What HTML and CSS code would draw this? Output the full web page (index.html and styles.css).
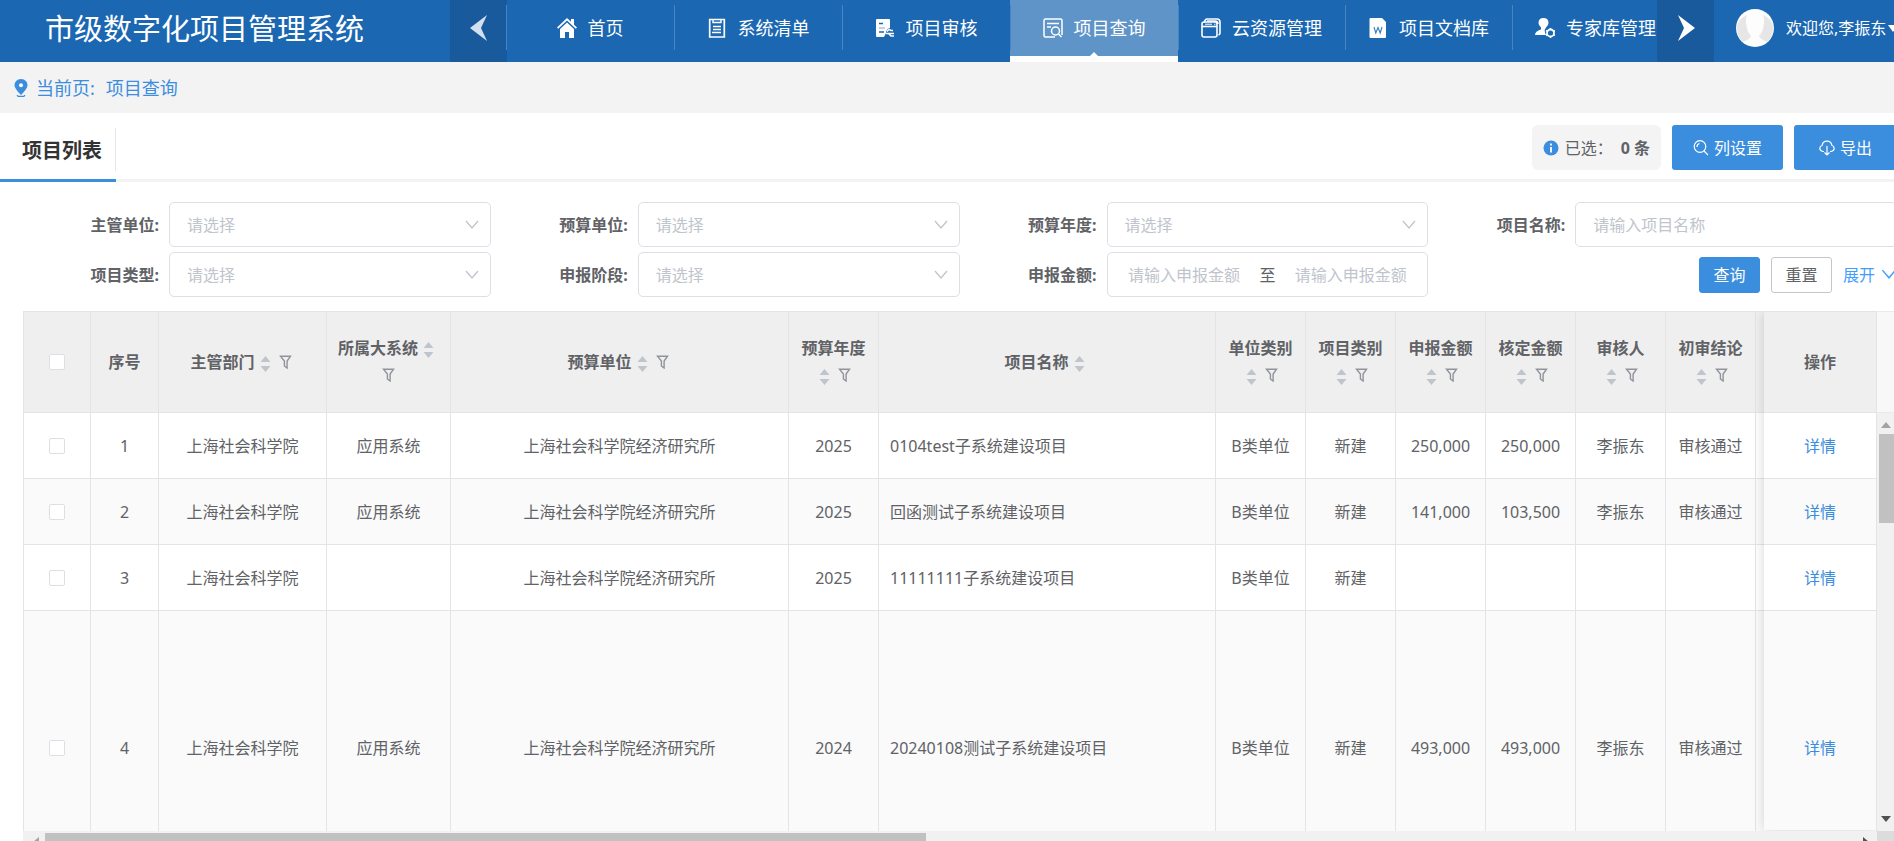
FILE: index.html
```
<!DOCTYPE html>
<html lang="zh-CN">
<head>
<meta charset="utf-8">
<title>市级数字化项目管理系统</title>
<link rel="stylesheet" href="styles.css">
</head>
<body>
<svg class="sprite" aria-hidden="true">
  <symbol id="funnel" viewBox="0 0 12 14"><path d="M1 1.2h10L7.6 6v7L4.9 11V6z" fill="none" stroke="currentColor" stroke-width="1.4"/></symbol>
  <symbol id="sort" viewBox="0 0 10 16"><path d="M5 0l5 6H0zM5 16l5-6H0z" fill="currentColor"/></symbol>
  <symbol id="chevron" viewBox="0 0 14 10"><path d="M1 1l6 7 6-7" fill="none" stroke="currentColor" stroke-width="1.3"/></symbol>
</svg>

<header class="topbar">
  <h1 class="brand">市级数字化项目管理系统</h1>
  <button class="nav-arrow" type="button" aria-label="向左"><svg width="18" height="26" viewBox="0 0 18 26"><path d="M17 0L0 13l17 13-6-13z" fill="#d3e0ef"/></svg></button>
  <nav class="nav">
    <a class="nav-item" href="#"><svg width="20" height="20" viewBox="0 0 20 20"><path d="M0 9.5L10 0l4 3.800V1h3v5.700l3 2.800-1.200 1.200L10 2.500 1.200 10.700z" fill="#fff"/><path d="M3 11l7-6.500L17 11v9h-5v-6H8v6H3z" fill="#fff"/></svg>首页</a>
    <a class="nav-item" href="#"><svg width="20" height="20" viewBox="0 0 20 20" fill="none" stroke="#fff"><path d="M5 1.500H2.700v17.500h14.600V1.500H15" stroke-width="1.700"/><path d="M5 1.500h10M6 1v3.500h8V1M6 8.500h8M6 11.500h8M5 14.500h9" stroke-width="1.400"/></svg>系统清单</a>
    <a class="nav-item" href="#"><svg width="20" height="20" viewBox="0 0 20 20"><path d="M2 1h12q1 0 1 1v8q-4 1-4 5l-2 4H2q-1 0-1-1V2q0-1 1-1z" fill="#fff"/><path d="M4 5.500h4M4 14h5" stroke="#1b67b2" stroke-width="1.500"/><path d="M4 10h6" stroke="#7aa8d5"/><path d="M12 13.500q2-3 4-1h2M11 15.500h8M13 15l3 3h3" fill="none" stroke="#fff" stroke-width="1.600"/></svg>项目审核</a>
    <a class="nav-item nav-item-active" href="#" aria-current="page"><svg width="20" height="20" viewBox="0 0 20 20" fill="none" stroke="#fff" stroke-width="1.500"><path d="M12 19H2.500Q1 19 1 17.500v-15Q1 1 2.500 1h15Q19 1 19 2.500V17"/><path d="M4 5.500h12M4 9h4"/><circle cx="12.500" cy="13" r="4"/><path d="M15.500 16l3 3"/></svg>项目查询</a>
    <a class="nav-item" href="#"><svg width="20" height="20" viewBox="0 0 20 20" fill="none" stroke="#fff" stroke-width="1.600"><path d="M3 4.500L4.500 1.700Q5 1 6 1h10q3 0 3 3v11q0 1.500-1.500 2"/><rect x="1" y="4" width="15" height="15" rx="2"/><path d="M1 8.500h15" /><path d="M4 6.200h7M13 6.200h1.500" stroke-width="1"/><path d="M6 3h8q3 0 3 3"/></svg>云资源管理</a>
    <a class="nav-item" href="#"><svg width="20" height="20" viewBox="0 0 20 20"><path d="M2.500 0H14l4 4v15q0 1-1 1H2.500q-1 0-1-1V1q0-1 1-1z" fill="#fff"/><path d="M6 9l1.800 6L10 9.500l2.200 5.500L14 9" fill="none" stroke="#3a7bbd" stroke-width="1.100"/></svg>项目文档库</a>
    <a class="nav-item" href="#"><svg width="20" height="20" viewBox="0 0 20 20"><path d="M0 17q0-4 6-5.500V9.500Q3.500 7.500 3.500 5q0-5 5-5t5 5q0 2.500-2.500 4.500-2 2-1 5l1 2.500z" fill="#fff"/><circle cx="15.500" cy="15" r="3.500" fill="none" stroke="#fff" stroke-width="1.800"/><path d="M15.500 10v1.500M15.500 18.500V20M11 12.500l1.300.8M20 12.500l-1.300.8M11 17.500l1.300-.8M20 17.500l-1.300-.8" stroke="#fff" stroke-width="1.500"/></svg>专家库管理</a>
  </nav>
  <button class="nav-arrow" type="button" aria-label="向右"><svg width="18" height="26" viewBox="0 0 18 26"><path d="M1 0l17 13L1 26l6-13z" fill="#fff"/></svg></button>
  <div class="user">
    <svg width="38" height="38" viewBox="0 0 38 38"><circle cx="19" cy="19" r="19" fill="#fdfdfd"/><path d="M11 6q-2 5-.5 11 1 7 4.500 10-1 3-8 6Q1 28 1 19 1 10 11 6zM27 6q2 5 .5 11-1 7-4.500 10 1 3 8 6 6-5 6-14Q37 10 27 6z" fill="#e6e6e6"/></svg>
    <button class="user-name" type="button">欢迎您,李振东<svg width="10" height="7" viewBox="0 0 10 7"><path d="M0 0h10L5 7z" fill="#fff"/></svg></button>
  </div>
</header>

<div class="crumb">
  <svg width="14" height="18" viewBox="0 0 14 18"><path d="M7 0q6.500.5 6.500 6.500Q13 10 7 16 1 10 .5 6.500.5.500 7 0z" fill="#3b8ddd"/><circle cx="7" cy="6.200" r="2" fill="#fff"/><path d="M3 16l1 1.300h6l1-1.300" fill="none" stroke="#3b8ddd" stroke-width="1.200"/></svg>
  <span>当前页:</span><a href="#">项目查询</a>
</div>

<div class="tabbar">
  <h2 class="tab">项目列表</h2>
  <div class="tools">
    <div class="selected"><svg width="16" height="16" viewBox="0 0 16 16"><circle cx="8" cy="8" r="7.500" fill="#3b8ddd"/><path d="M8 3.500v2M8 7v5.500" stroke="#fff" stroke-width="1.800"/></svg><span>已选：</span><b>0 条</b></div>
    <button class="btn-tool" type="button"><svg width="16" height="16" viewBox="0 0 16 16" fill="none" stroke="#fff" stroke-width="1.200"><circle cx="7" cy="6.500" r="5.800"/><path d="M4 7q0-3 2.500-3.500M11 11l4 4"/></svg>列设置</button>
    <button class="btn-tool" type="button"><svg width="16" height="16" viewBox="0 0 16 16" fill="none" stroke="#fff" stroke-width="1.200"><path d="M5 11.500H4Q.8 11 .8 8.300.8 6 3.200 5.200 3.800 1.200 8 1.200t4.800 4q2.400.8 2.400 3.100Q15.200 11 12 11.500h-1M8 6v9M5.500 12.500L8 15l2.500-2.500"/></svg>导出</button>
  </div>
</div>

<form class="filters">
  <div class="field"><label for="f1">主管单位:</label><div class="control"><select id="f1"><option>请选择</option></select><svg class="arrow"><use href="#chevron"/></svg></div></div>
  <div class="field"><label for="f2">预算单位:</label><div class="control"><select id="f2"><option>请选择</option></select><svg class="arrow"><use href="#chevron"/></svg></div></div>
  <div class="field"><label for="f3">预算年度:</label><div class="control"><select id="f3"><option>请选择</option></select><svg class="arrow"><use href="#chevron"/></svg></div></div>
  <div class="field"><label for="f4">项目名称:</label><div class="control"><input id="f4" type="text" placeholder="请输入项目名称"></div></div>
  <div class="field"><label for="f5">项目类型:</label><div class="control"><select id="f5"><option>请选择</option></select><svg class="arrow"><use href="#chevron"/></svg></div></div>
  <div class="field"><label for="f6">申报阶段:</label><div class="control"><select id="f6"><option>请选择</option></select><svg class="arrow"><use href="#chevron"/></svg></div></div>
  <div class="field"><label for="f7">申报金额:</label><div class="control range"><input id="f7" type="text" placeholder="请输入申报金额"><span>至</span><input type="text" placeholder="请输入申报金额" aria-label="申报金额上限"></div></div>
  <div class="actions">
    <button class="btn btn-primary" type="button">查询</button>
    <button class="btn" type="reset">重置</button>
    <button class="more" type="button">展开<svg><use href="#chevron"/></svg></button>
  </div>
</form>

<main class="grid">
  <div class="grid-body">
    <table class="data">
      <colgroup><col class="c-check"><col class="c-index"><col class="c-dept"><col class="c-sys"><col class="c-unit"><col class="c-s"><col class="c-name"><col class="c-s"><col class="c-s"><col class="c-s"><col class="c-s"><col class="c-s"><col class="c-s"><col class="c-rest"></colgroup>
      <thead>
        <tr>
          <th><input type="checkbox" aria-label="全选"></th>
          <th>序号</th>
          <th>主管部门<svg class="sort"><use href="#sort"/></svg><svg class="funnel"><use href="#funnel"/></svg></th>
          <th>所属大系统<svg class="sort"><use href="#sort"/></svg><svg class="funnel"><use href="#funnel"/></svg></th>
          <th>预算单位<svg class="sort"><use href="#sort"/></svg><svg class="funnel"><use href="#funnel"/></svg></th>
          <th>预算年度<svg class="sort"><use href="#sort"/></svg><svg class="funnel"><use href="#funnel"/></svg></th>
          <th>项目名称<svg class="sort"><use href="#sort"/></svg></th>
          <th>单位类别<svg class="sort"><use href="#sort"/></svg><svg class="funnel"><use href="#funnel"/></svg></th>
          <th>项目类别<svg class="sort"><use href="#sort"/></svg><svg class="funnel"><use href="#funnel"/></svg></th>
          <th>申报金额<svg class="sort"><use href="#sort"/></svg><svg class="funnel"><use href="#funnel"/></svg></th>
          <th>核定金额<svg class="sort"><use href="#sort"/></svg><svg class="funnel"><use href="#funnel"/></svg></th>
          <th>审核人<span class="tools-line"><svg class="sort"><use href="#sort"/></svg><svg class="funnel"><use href="#funnel"/></svg></span></th>
          <th>初审结论<svg class="sort"><use href="#sort"/></svg><svg class="funnel"><use href="#funnel"/></svg></th>
          <th></th>
        </tr>
      </thead>
      <tbody>
        <tr><td><input type="checkbox" aria-label="选择第1行"></td><td>1</td><td>上海社会科学院</td><td>应用系统</td><td>上海社会科学院经济研究所</td><td>2025</td><td class="left">0104test子系统建设项目</td><td>B类单位</td><td>新建</td><td>250,000</td><td>250,000</td><td>李振东</td><td>审核通过</td><td></td></tr>
        <tr><td><input type="checkbox" aria-label="选择第2行"></td><td>2</td><td>上海社会科学院</td><td>应用系统</td><td>上海社会科学院经济研究所</td><td>2025</td><td class="left">回函测试子系统建设项目</td><td>B类单位</td><td>新建</td><td>141,000</td><td>103,500</td><td>李振东</td><td>审核通过</td><td></td></tr>
        <tr><td><input type="checkbox" aria-label="选择第3行"></td><td>3</td><td>上海社会科学院</td><td></td><td>上海社会科学院经济研究所</td><td>2025</td><td class="left">11111111子系统建设项目</td><td>B类单位</td><td>新建</td><td></td><td></td><td></td><td></td><td></td></tr>
        <tr class="tall"><td><input type="checkbox" aria-label="选择第4行"></td><td>4</td><td>上海社会科学院</td><td>应用系统</td><td>上海社会科学院经济研究所</td><td>2024</td><td class="left">20240108测试子系统建设项目</td><td>B类单位</td><td>新建</td><td>493,000</td><td>493,000</td><td>李振东</td><td>审核通过</td><td></td></tr>
      </tbody>
    </table>
    <div class="pinned">
      <table class="data">
        <thead><tr><th>操作</th></tr></thead>
        <tbody>
          <tr><td><a href="#">详情</a></td></tr>
          <tr><td><a href="#">详情</a></td></tr>
          <tr><td><a href="#">详情</a></td></tr>
          <tr class="tall"><td><a href="#">详情</a></td></tr>
        </tbody>
      </table>
    </div>
  </div>
  <div class="vscroll">
    <div class="vscroll-head"></div>
    <div class="vscroll-track">
      <svg width="10" height="6" viewBox="0 0 10 6"><path d="M5 0l5 6H0z" fill="#a3a3a3"/></svg>
      <div class="vthumb"></div>
      <svg width="10" height="6" viewBox="0 0 10 6"><path d="M0 0h10L5 6z" fill="#505050"/></svg>
    </div>
  </div>
  <div class="hscroll">
    <svg width="6" height="10" viewBox="0 0 6 10"><path d="M6 0v10L0 5z" fill="#a3a3a3"/></svg>
    <div class="hthumb"></div>
    <svg width="6" height="10" viewBox="0 0 6 10"><path d="M0 0v10l6-5z" fill="#505050"/></svg>
  </div>
  <div class="corner"></div>
</main>
</body>
</html>
```

FILE: styles.css
```
* { box-sizing: border-box; }

body {
  margin: 0;
  height: 100vh;
  display: flex;
  flex-direction: column;
  overflow: hidden;
  background: #fff;
  color: #606266;
  font: 16px/24px "Noto Sans", "Noto Sans CJK SC", sans-serif;
}

button, input, select { font: inherit; color: inherit; }
button { border: 0; padding: 0; background: none; cursor: pointer; }
a { color: #3b8ddd; text-decoration: none; }
svg { flex: none; }
.sprite { display: none; }

/* Top bar */
.topbar {
  flex: none;
  display: flex;
  height: 62px;
  background: #1b67b2;
  color: #fff;
}
.brand {
  flex: none;
  width: 450px;
  margin: 0;
  padding-left: 45px;
  font-size: 29px;
  font-weight: 400;
  line-height: 58px;
  white-space: nowrap;
}
.nav-arrow {
  flex: none;
  display: flex;
  align-items: center;
  justify-content: center;
  width: 57px;
  padding-bottom: 6px;
  background: #195a9d;
}
.nav {
  flex: 1;
  min-width: 0;
  display: flex;
  margin-left: -1px;
  overflow: hidden;
}
.nav-item {
  position: relative;
  flex: none;
  display: flex;
  align-items: center;
  justify-content: center;
  gap: 11px;
  width: 168px;
  height: 62px;
  padding-bottom: 6px;
  color: #fff;
  font-size: 18px;
  white-space: nowrap;
}
.nav-item::before {
  content: "";
  position: absolute;
  left: 0;
  top: 5px;
  width: 1px;
  height: 45px;
  background: #4985c1;
}
.nav-item-active {
  padding-bottom: 0;
  border-bottom: 6px solid #fff;
  background: #5f94c9;
}
.nav-item-active ~ .nav-item { width: 167px; }
.nav-item-active::after {
  content: "";
  position: absolute;
  left: 50%;
  bottom: 0;
  margin-left: -4px;
  border: 4px solid transparent;
  border-top: 0;
  border-bottom-color: #fff;
}
.user {
  flex: none;
  display: flex;
  align-items: center;
  gap: 12px;
  width: 180px;
  padding: 0 0 6px 22px;
}
.user-name {
  display: flex;
  align-items: center;
  gap: 2px;
  white-space: nowrap;
}

/* Breadcrumb */
.crumb {
  flex: none;
  display: flex;
  align-items: center;
  height: 51px;
  padding: 0 0 0 14px;
  background: #f3f3f3;
  color: #3b8ddd;
  font-size: 18px;
}
.crumb span { margin: 0 11px 0 8px; }

/* Tab row */
.tabbar {
  flex: none;
  display: flex;
  justify-content: space-between;
  align-items: flex-start;
  height: 69px;
  margin-right: -3px;
  border-bottom: 3px solid #f3f3f3;
}
.tab {
  position: relative;
  width: 116px;
  height: 69px;
  margin: 0;
  padding-left: 22px;
  border-bottom: 3px solid #3b8ddd;
  color: #333;
  font-size: 20px;
  line-height: 75px;
}
.tab::after {
  content: "";
  position: absolute;
  right: 0;
  top: 15px;
  width: 1px;
  height: 43px;
  background: #e8e8e8;
}
.tools { display: flex; gap: 11px; padding-top: 12px; }
.selected {
  display: flex;
  align-items: center;
  height: 45px;
  padding: 0 11px;
  border-radius: 6px;
  background: #f4f4f5;
}
.selected span { margin: 0 8px 0 6px; }
.btn-tool {
  display: flex;
  align-items: center;
  justify-content: center;
  gap: 5px;
  height: 45px;
  padding: 0 21px;
  border-radius: 3px;
  background: #3b8ddd;
  color: #fff;
}
.btn-tool:last-child { padding: 0 25px; }

/* Filters */
.filters {
  flex: none;
  display: grid;
  grid-template-columns: repeat(4, 1fr);
  row-gap: 5px;
  margin: 0 -3px 0 22px;
  padding: 20px 0 14px;
}
.field { display: flex; align-items: center; }
.field label {
  flex: none;
  width: 147px;
  padding-right: 10px;
  font-weight: 700;
  text-align: right;
}
.control { position: relative; flex: 1; min-width: 0; }
.control select,
.control > input,
.range {
  width: 100%;
  height: 45px;
  border: 1px solid #dcdfe6;
  border-radius: 5px;
  background: #fff;
  outline: 0;
}
.control select, .control > input { padding: 0 17px; }
.control select { display: block; appearance: none; color: #c0c4cc; }
.control > input { display: block; }
::placeholder { color: #c0c4cc; opacity: 1; }
.arrow {
  position: absolute;
  right: 12px;
  top: 18px;
  width: 14px;
  height: 10px;
  color: #c0c4cc;
  pointer-events: none;
}
.control.range {
  display: flex;
  align-items: center;
  padding: 0 11px;
}
.control.range > input {
  flex: 1;
  width: 0;
  height: 43px;
  padding: 0;
  border: 0;
  text-align: center;
}
.range span { padding: 0 10px; }
.actions {
  display: flex;
  align-items: center;
  justify-content: flex-end;
  gap: 11px;
}
.btn {
  width: 61px;
  height: 36px;
  border: 1px solid #c4c6ca;
  border-radius: 3px;
  background: #fff;
}
.btn-primary { border-color: #3b8ddd; background: #3b8ddd; color: #fff; }
.more { display: flex; align-items: center; gap: 6px; color: #409eff; }
.more svg { width: 16px; height: 11px; }

/* Table */
.grid {
  flex: 1;
  min-height: 0;
  display: grid;
  grid-template: minmax(0, 1fr) 10px / minmax(0, 1fr) 17px;
  margin-left: 23px;
}
.grid-body { position: relative; overflow: hidden; border: 1px solid #e4e4e4; border-width: 1px 0 0 1px; }
.data {
  width: 100%;
  table-layout: fixed;
  border-collapse: separate;
  border-spacing: 0;
}
.c-check { width: 67px; }
.c-index { width: 68px; }
.c-dept { width: 168px; }
.c-sys { width: 124px; }
.c-unit { width: 338px; }
.c-s { width: 90px; }
.c-name { width: 337px; }
.data th, .data td {
  padding: 0 10px;
  border: 1px solid #e4e4e4;
  border-width: 0 1px 1px 0;
  text-align: center;
  vertical-align: middle;
}
.data th { height: 101px; background: #efefef; font-weight: 700; line-height: 27px; }
.data td { height: 66px; background: #fff; }
.data tr:nth-child(even) td { background: #fafafa; }
.data .tall td { height: 275px; }
.data .left { padding-left: 11px; text-align: left; }
.data th:last-child, .data td:last-child { padding: 0; }
.sort { width: 21px; height: 16px; vertical-align: -4px; color: #c0c4cc; }
.funnel { width: 19px; height: 14px; vertical-align: -1px; color: #909399; }
.tools-line { display: block; }

input[type="checkbox"] {
  appearance: none;
  display: block;
  width: 16px;
  height: 16px;
  margin: 0 auto;
  border: 1px solid #dcdfe6;
  border-radius: 2px;
  background: #fff;
}

.pinned {
  position: absolute;
  top: 0;
  right: 0;
  bottom: 1px;
  width: 113px;
  overflow: hidden;
  box-shadow: 0 0 11px rgba(0, 0, 0, .16);
}

/* Scroll bars */
.vscroll { display: flex; flex-direction: column; background: #f1f1f1; }
.vscroll-head { height: 102px; border: 1px solid #e8eaf2; border-width: 1px 0; background: #f8f8f8; }
.vscroll-track {
  flex: 1;
  display: flex;
  flex-direction: column;
  align-items: center;
  padding: 9px 0;
}
.vthumb { width: 15px; height: 89px; margin: 6px 0 auto; background: #c1c1c1; align-self: flex-end; }
.hscroll {
  display: flex;
  overflow: hidden;
  background: #f1f1f1;
  align-items: flex-start;
  padding: 6px 8px 0 10px;
}
.hthumb { flex: none; width: 48%; height: 8px; margin: -4px auto 0 6px; background: #c1c1c1; }
.corner { background: #dcdcdc; }
```
